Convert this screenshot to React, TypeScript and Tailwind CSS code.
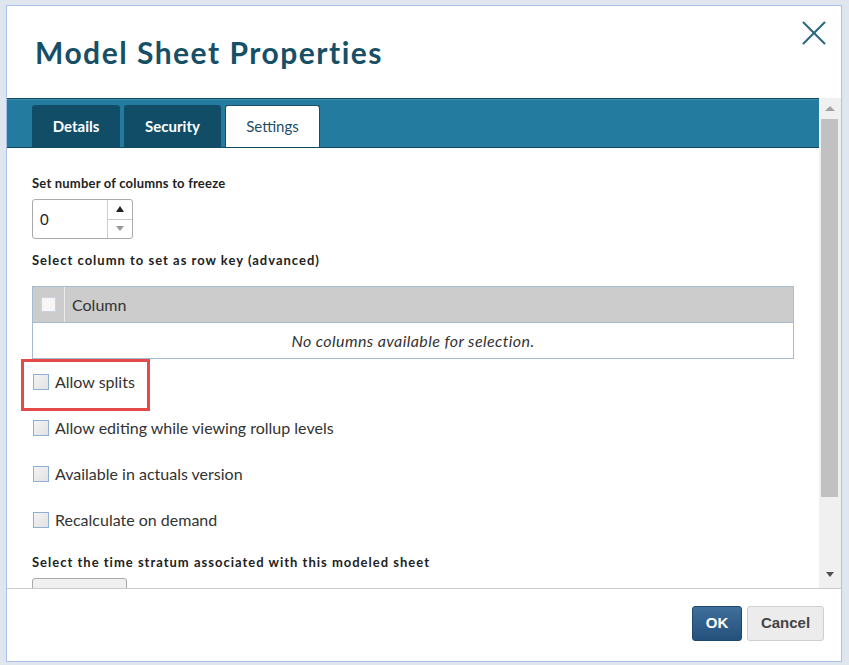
import { X } from 'lucide-react'

const options = [
  'Allow splits',
  'Allow editing while viewing rollup levels',
  'Available in actuals version',
  'Recalculate on demand',
]

function Checkbox() {
  return (
    <span className="w-[16px] h-[16px] shrink-0 border border-[#8fb0d6] bg-gradient-to-br from-[#f4f4f4] to-[#e2e2e2]" />
  )
}

export default function App() {
  return (
    <div className="w-[849px] h-[665px] bg-[#dfe6ee] pl-[6px] pt-[5px] font-['Lato',sans-serif]">
      <div className="w-[836px] h-[657px] border border-[#a9c1ea] bg-white flex flex-col">
        {/* header */}
        <div className="h-[92px] shrink-0 flex items-start justify-between pl-[28px] pr-[6px]">
          <h1 className="mt-[28px] text-[30px] leading-[36px] tracking-[1.5px] font-bold text-[#174f66]">Model Sheet Properties</h1>
          <X className="mt-[6px] text-[#2d6a80]" size={42} strokeWidth={1.2} />
        </div>

        {/* body + scrollbar */}
        <div className="h-[490px] shrink-0 flex overflow-hidden">
          <div className="flex-1 flex flex-col overflow-hidden">
            {/* tab bar */}
            <div className="h-[50px] shrink-0 border-t border-b border-[#114862] bg-[#237ba0] flex items-end pl-[25px] gap-[4px] shadow-[inset_0_1px_0_#3d8db0]">
              <div className="h-[42px] w-[88px] rounded-t-[3px] bg-[#114d67] text-white font-bold text-[15px] flex items-center justify-center">Details</div>
              <div className="h-[42px] w-[97px] rounded-t-[3px] bg-[#114d67] text-white font-bold text-[15px] flex items-center justify-center">Security</div>
              <div className="h-[42px] w-[95px] rounded-t-[3px] bg-white border border-b-0 border-[#1a4e66] text-[#1e4e66] text-[15px] flex items-center justify-center">Settings</div>
            </div>

            {/* settings content */}
            <div className="pl-[25px] pr-[25px] pt-[27px] text-[#333]">
              <p className="text-[13px] leading-[16px] tracking-[0.2px] font-bold text-[#222]">Set number of columns to freeze</p>
              <div className="mt-[8px] w-[101px] h-[40px] border border-[#aaaaaa] rounded-[3px] flex">
                <div className="flex-1 flex items-center pl-[7px] text-[15px] text-[#222]">0</div>
                <div className="w-[25px] border-l border-[#cccccc] flex flex-col">
                  <div className="flex-1 flex items-center justify-center border-b border-[#cccccc]">
                    <span className="w-0 h-0 border-l-[4px] border-r-[4px] border-b-[6px] border-l-transparent border-r-transparent border-b-[#222]" />
                  </div>
                  <div className="flex-1 flex items-center justify-center">
                    <span className="w-0 h-0 border-l-[4px] border-r-[4px] border-t-[5px] border-l-transparent border-r-transparent border-t-[#999]" />
                  </div>
                </div>
              </div>

              <p className="mt-[13px] text-[13px] leading-[16px] tracking-[1px] font-bold text-[#222]">Select column to set as row key (advanced)</p>

              <div className="mt-[18px] w-[762px] border border-[#a6bbd0]">
                <div className="h-[36px] bg-[#cccccc] flex border-b border-[#a6bbd0]">
                  <div className="w-[32px] flex items-center justify-center border-r border-[#ececec]">
                    <span className="w-[15px] h-[15px] bg-[#f6f6f6] border border-[#c8d4e2]" />
                  </div>
                  <div className="flex items-center pl-[7px] text-[16px] text-[#333]">Column</div>
                </div>
                <div className="h-[35px] flex items-center justify-center italic text-[16px] tracking-[0.4px] text-[#333]">
                  No columns available for selection.
                </div>
              </div>

              <div className="flex flex-col">
                {options.map((o, i) => (
                  <div key={o} className="relative h-[46px] flex items-center gap-[6px] pl-[1px] text-[16px] text-[#333]">
                    <Checkbox />
                    <span>{o}</span>
                    {i === 0 && (
                      <div className="absolute left-[-11px] top-[0px] w-[129px] h-[52px] border-[3px] border-[#e44a4a]" />
                    )}
                  </div>
                ))}
              </div>

              <p className="mt-[11px] text-[13px] leading-[16px] tracking-[1px] font-bold text-[#222]">Select the time stratum associated with this modeled sheet</p>
              <div className="mt-[8px] w-[95px] h-[30px] rounded-[3px] border border-[#aaaaaa] bg-[#f0f0f0]" />
            </div>
          </div>

          {/* scrollbar */}
          <div className="w-[22px] shrink-0 bg-[#f0f0f0] flex flex-col items-center pr-[1px]">
            <div className="h-[21px] flex items-center justify-center">
              <span className="w-0 h-0 border-l-[5px] border-r-[5px] border-b-[5px] border-l-transparent border-r-transparent border-b-[#a3a3a3]" />
            </div>
            <div className="w-[17px] h-[378px] bg-[#c1c1c1]" />
            <div className="flex-1" />
            <div className="h-[24px] flex items-start justify-center pt-[8px]">
              <span className="w-0 h-0 border-l-[4px] border-r-[4px] border-t-[5px] border-l-transparent border-r-transparent border-t-[#505050]" />
            </div>
          </div>
        </div>

        {/* footer */}
        <div className="flex-1 border-t border-[#cccccc] flex items-start justify-end gap-[5px] pr-[17px] pt-[17px] font-['Liberation_Sans',sans-serif]">
          <button className="w-[50px] h-[35px] rounded-[3px] border border-[#1c4872] bg-gradient-to-b from-[#3f6f9a] to-[#24507c] text-white font-bold text-[15px]">OK</button>
          <button className="w-[77px] h-[35px] rounded-[3px] border border-[#cfcfcf] bg-[#ececec] text-[#444] font-bold text-[15px]">Cancel</button>
        </div>
      </div>
    </div>
  )
}
